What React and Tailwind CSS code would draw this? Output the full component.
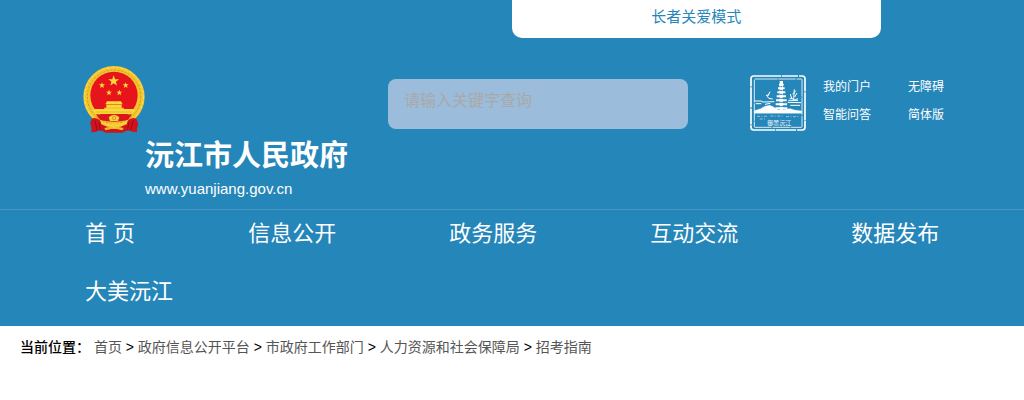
const SERVICE_LINKS = ['我的门户', '无障碍', '智能问答', '简体版']

const NAV_ITEMS = ['首 页', '信息公开', '政务服务', '互动交流', '数据发布', '大美沅江']

const CRUMBS = ['首页', '政府信息公开平台', '市政府工作部门', '人力资源和社会保障局', '招考指南']

const STAR = 'M0 -10 L2.5 -3.2 L9.5 -3.1 L3.9 1.3 L5.9 8.1 L0 4.1 L-5.9 8.1 L-3.9 1.3 L-9.5 -3.1 L-2.5 -3.2 Z'

export default function App() {
  return (
    <div className="font-['Liberation_Sans','Noto_Sans_CJK_SC',sans-serif] text-black">
      <header className="bg-[#2586b9] text-white">
        <a href="#" className="ml-[50%] block h-[38px] w-[36%] rounded-b-[10px] bg-white text-center text-[15px] leading-[34px] text-[#2586b9]">
          长者关爱模式
        </a>

        <div className="flex items-start justify-between pt-7 pr-20 pb-2.5 pl-[83px]">
          <a href="#" className="block">
            <Emblem />
            <h1 className="ml-[62px] text-[29px] leading-[46px] font-bold">沅江市人民政府</h1>
            <p className="ml-[62px] text-[15px] leading-5">www.yuanjiang.gov.cn</p>
          </a>

          <input
            type="text"
            aria-label="站内搜索"
            placeholder="请输入关键字查询"
            className="mt-[13px] ml-10 h-[50px] w-[300px] rounded-lg bg-[#9bbcda] px-4 pb-1.5 text-base text-gray-700 outline-none placeholder:text-[#a9a9a9]"
          />

          <div className="ml-[62px] flex items-start gap-[17px]">
            <Seal />
            <ul className="mt-[7px] grid grid-cols-[48px_36px] gap-x-[37px] text-xs leading-7">
              {SERVICE_LINKS.map((label) => (
                <li key={label}><a href="#" className="whitespace-nowrap">{label}</a></li>
              ))}
            </ul>
          </div>
        </div>

        <nav className="border-t border-[#4596c3]">
          <ul className="flex flex-wrap gap-x-[113px] pr-20 pl-[85px] text-[22px] leading-[48px]">
            {NAV_ITEMS.map((label) => (
              <li key={label} className="mb-2.5"><a href="#">{label}</a></li>
            ))}
          </ul>
        </nav>
      </header>

      <nav aria-label="当前位置" className="px-5 pt-[9px] text-sm leading-6">
        <span className="font-medium">当前位置：</span>{' '}
        {CRUMBS.map((label, index) => (
          <span key={label}>
            {index > 0 && ' > '}
            <a href="#" className="text-[#555555]">{label}</a>
          </span>
        ))}
      </nav>
    </div>
  )
}

function Emblem() {
  return (
    <svg className="h-[67px] w-[62px]" viewBox="27 18 186 201" preserveAspectRatio="none" aria-hidden="true">
      <path d="M49 187 L70 184 L120 200 L170 184 L193 188 L187 216 L160 211 L145 218 L96 218 L80 211 L55 217 Z" fill="#c9151e" />
      <circle cx="120" cy="110" r="92" fill="#f3c62f" />
      <circle cx="120" cy="110" r="80" fill="none" stroke="#d99a1c" strokeWidth="3" strokeDasharray="7 4" />
      <circle cx="120" cy="110" r="88" fill="none" stroke="#fbe25a" strokeWidth="3" strokeDasharray="9 5" />
      <circle cx="120" cy="106" r="71" fill="#e8141c" />
      <g fill="#fbd93b">
        <path d={STAR} transform="translate(119 63) scale(1.7)" />
        <path d={STAR} transform="translate(84 76) scale(.95)" />
        <path d={STAR} transform="translate(155 76) scale(.95)" />
        <path d={STAR} transform="translate(105 98) scale(.95)" />
        <path d={STAR} transform="translate(136 98) scale(.95)" />
        <path d="M99 124 L141 124 L146 133 L94 133 Z M97 134 H143 V143 H97 Z M91 143 H149 V149 H91 Z" />
        <path d="M62 147 H178 L184 152 L174 162 H66 L56 152 Z" />
      </g>
      <path d="M97 134 H143 M92 144 H148 M65 156 H175" stroke="#d89b1d" strokeWidth="1.5" />
      <path d="M66 163 Q120 168 174 163 L162 180 Q120 191 78 180 Z" fill="#d7191e" />
      <path d="M104 172 Q120 156 136 172 L132 183 H108 Z" fill="#f7d136" />
      <circle cx="120" cy="174" r="6" fill="#e0901c" />
      <circle cx="120" cy="174" r="3" fill="#fae054" />
      <path d="M53 176 Q67 170 81 184 L96 194 L83 212 L71 209 L66 215 L51 217 L56 199 L49 190 Z" fill="#d3121c" />
      <path d="M187 176 Q173 170 159 184 L144 194 L157 212 L169 209 L174 215 L190 217 L185 199 L192 190 Z" fill="#d3121c" />
      <path d="M62 181 L70 211 M76 188 L79 209 M178 181 L170 211 M164 188 L161 209" stroke="#990d17" strokeWidth="3" />
      <path d="M78 179 Q99 195 120 189 Q141 195 162 179 L158 193 Q140 202 131 200 L127 206 H113 L109 200 Q99 202 82 193 Z" fill="#f5cf38" />
      <path d="M91 204 L108 200 L120 204 L132 200 L149 204 L145 211 L128 207 L112 207 L95 211 Z" fill="#f3b829" />
    </svg>
  )
}

function Seal() {
  return (
    <svg className="mt-[9px] h-14 w-14" viewBox="30 27 168 168" fill="none" stroke="white" aria-hidden="true">
      <rect x="33" y="30" width="162" height="162" rx="8" strokeWidth="5" strokeDasharray="83 2 48 3 61 2" />
      <rect x="43" y="39" width="143" height="145" rx="2" strokeWidth="2.5" strokeDasharray="68 2 52 3" />
      {/* pagoda */}
      <path d="M124 45 V140" strokeWidth="10" />
      <path d="M117 56 H131 M114 67 H134 M112 79 H136 M110 91 H138 M108 103 H140 M107 115 H141 M106 127 H142" strokeWidth="6" />
      <path d="M121 62 H127 M120 73 H128 M120 85 H128 M119 97 H129 M119 109 H129 M118 121 H130" stroke="#2586b9" strokeWidth="3" />
      {/* reeds and birds */}
      <path d="M78 89 L88 85 M83 91 L90 77 M80 90 L87 97 L98 99" strokeWidth="3" />
      <path d="M149 97 Q159 94 161 103 L174 98 M155 97 L151 84 M161 101 L163 70 M164 93 L171 81 M145 103 H174 M158 85 L167 74" strokeWidth="3" />
      {/* shore and water */}
      <path d="M43 105 L63 105 L69 108 L103 107 M143 109 L183 110 M47 113 H64 M75 115 L91 112 M151 118 H180" strokeWidth="3" />
      <path d="M43 134 L62 128 L75 121 L89 118 L101 123 L110 130 L122 133 L139 129 L151 128 L163 132 L185 135 V142 H43 Z" fill="white" strokeWidth="1" />
      <path d="M51 151 H82 M91 150 H128 M138 152 H179 M59 159 H78" strokeWidth="1.5" strokeDasharray="9 4 3 5" />
      <text x="82" y="176" fill="white" stroke="none" fontSize="18" fontFamily="'Noto Sans CJK SC', sans-serif">御景沅江</text>
    </svg>
  )
}
